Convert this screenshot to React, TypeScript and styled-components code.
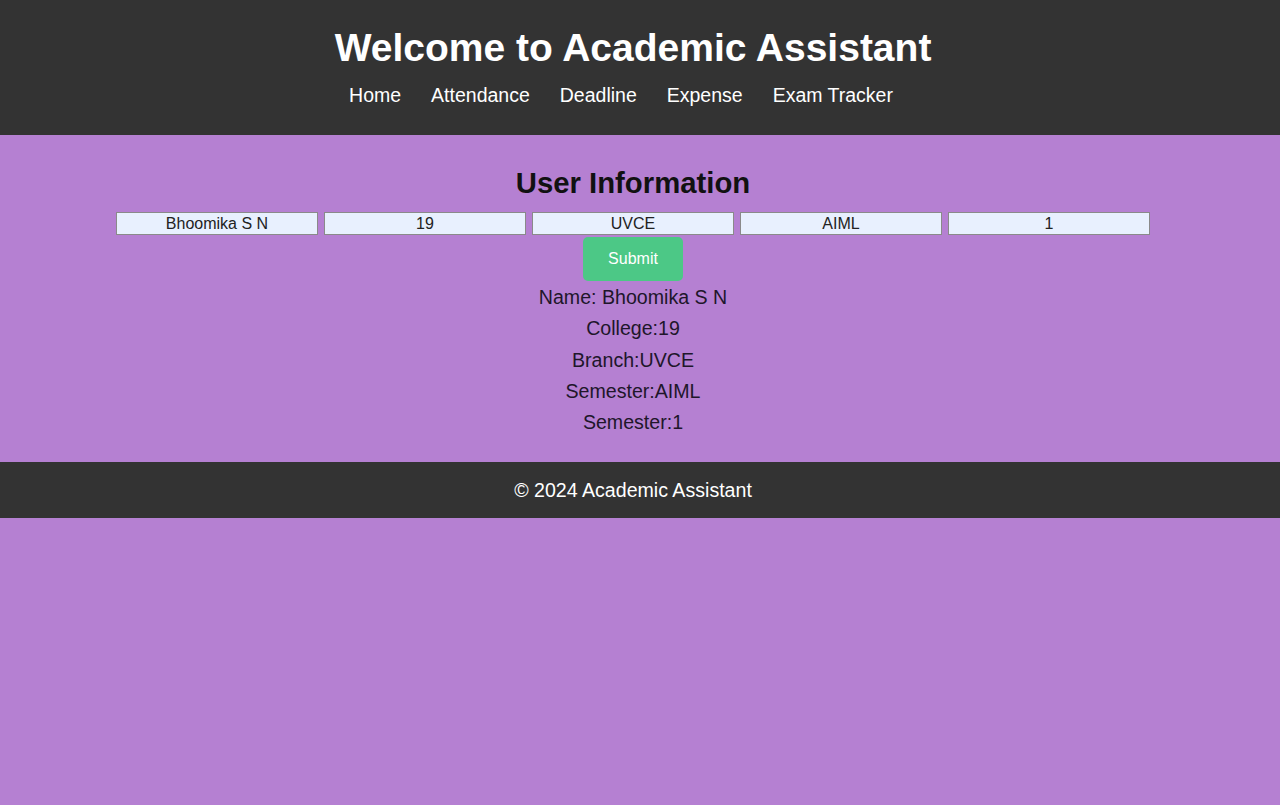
import styled, { createGlobalStyle } from "styled-components";

const GlobalStyle = createGlobalStyle`
  html, body {
    margin: 0;
    padding: 0;
    background: #b580d2;
    font-family: "Liberation Sans", Arial, sans-serif;
  }
`;

const Header = styled.header`
  background: #333333;
  color: #ffffff;
  padding: 25px 14px 29px 0;
  text-align: center;
  h1 {
    margin: 0 0 14px 0;
    font-size: 39px;
    line-height: 45px;
    font-weight: 700;
  }
`;

const Nav = styled.nav`
  display: flex;
  justify-content: center;
  gap: 30px;
  padding-right: 24px;
  a {
    color: #ffffff;
    text-decoration: none;
    font-size: 19.5px;
    line-height: 22px;
  }
`;

const Main = styled.main`
  padding: 31px 14px 24px 0;
  text-align: center;
  h2 {
    margin: 0 0 12px 0;
    font-size: 29.3px;
    line-height: 34px;
    font-weight: 700;
    color: #111111;
  }
`;

const Form = styled.form`
  display: flex;
  flex-direction: column;
  align-items: center;
  gap: 2px;
`;

const Fields = styled.div`
  display: flex;
  justify-content: center;
  gap: 6px;
`;

const Field = styled.input`
  box-sizing: border-box;
  width: 202px;
  height: 23px;
  padding: 0 4px;
  border: 1px solid #8a8a8a;
  background: #e8f0fe;
  color: #222222;
  font-family: "Liberation Sans", Arial, sans-serif;
  font-size: 16px;
  text-align: center;
  outline: none;
`;

const SubmitButton = styled.button`
  width: 100px;
  height: 44px;
  border: none;
  border-radius: 5px;
  background: #4cc886;
  color: #ffffff;
  font-family: "Liberation Sans", Arial, sans-serif;
  font-size: 16px;
  cursor: pointer;
`;

const Results = styled.div`
  margin-top: 1px;
  color: #20162a;
  p {
    margin: 0;
    font-size: 19.6px;
    line-height: 31.25px;
  }
`;

const Footer = styled.footer`
  background: #333333;
  color: #ffffff;
  text-align: center;
  padding: 17px 14px 17px 0;
  font-size: 19.6px;
  line-height: 22px;
`;

const user = {
  name: "Bhoomika S N",
  college: "19",
  branch: "UVCE",
  semester: "AIML",
  year: "1",
};

export default function App() {
  return (
    <>
      <GlobalStyle />
      <Header>
        <h1>Welcome to Academic Assistant</h1>
        <Nav>
          <a href="#">Home</a>
          <a href="#">Attendance</a>
          <a href="#">Deadline</a>
          <a href="#">Expense</a>
          <a href="#">Exam Tracker</a>
        </Nav>
      </Header>
      <Main>
        <h2>User Information</h2>
        <Form onSubmit={(e) => e.preventDefault()}>
          <Fields>
            <Field defaultValue={user.name} />
            <Field defaultValue={user.college} />
            <Field defaultValue={user.branch} />
            <Field defaultValue={user.semester} />
            <Field defaultValue={user.year} />
          </Fields>
          <SubmitButton type="submit">Submit</SubmitButton>
        </Form>
        <Results>
          <p>Name: {user.name}</p>
          <p>College:{user.college}</p>
          <p>Branch:{user.branch}</p>
          <p>Semester:{user.semester}</p>
          <p>Semester:{user.year}</p>
        </Results>
      </Main>
      <Footer>© 2024 Academic Assistant</Footer>
    </>
  );
}
